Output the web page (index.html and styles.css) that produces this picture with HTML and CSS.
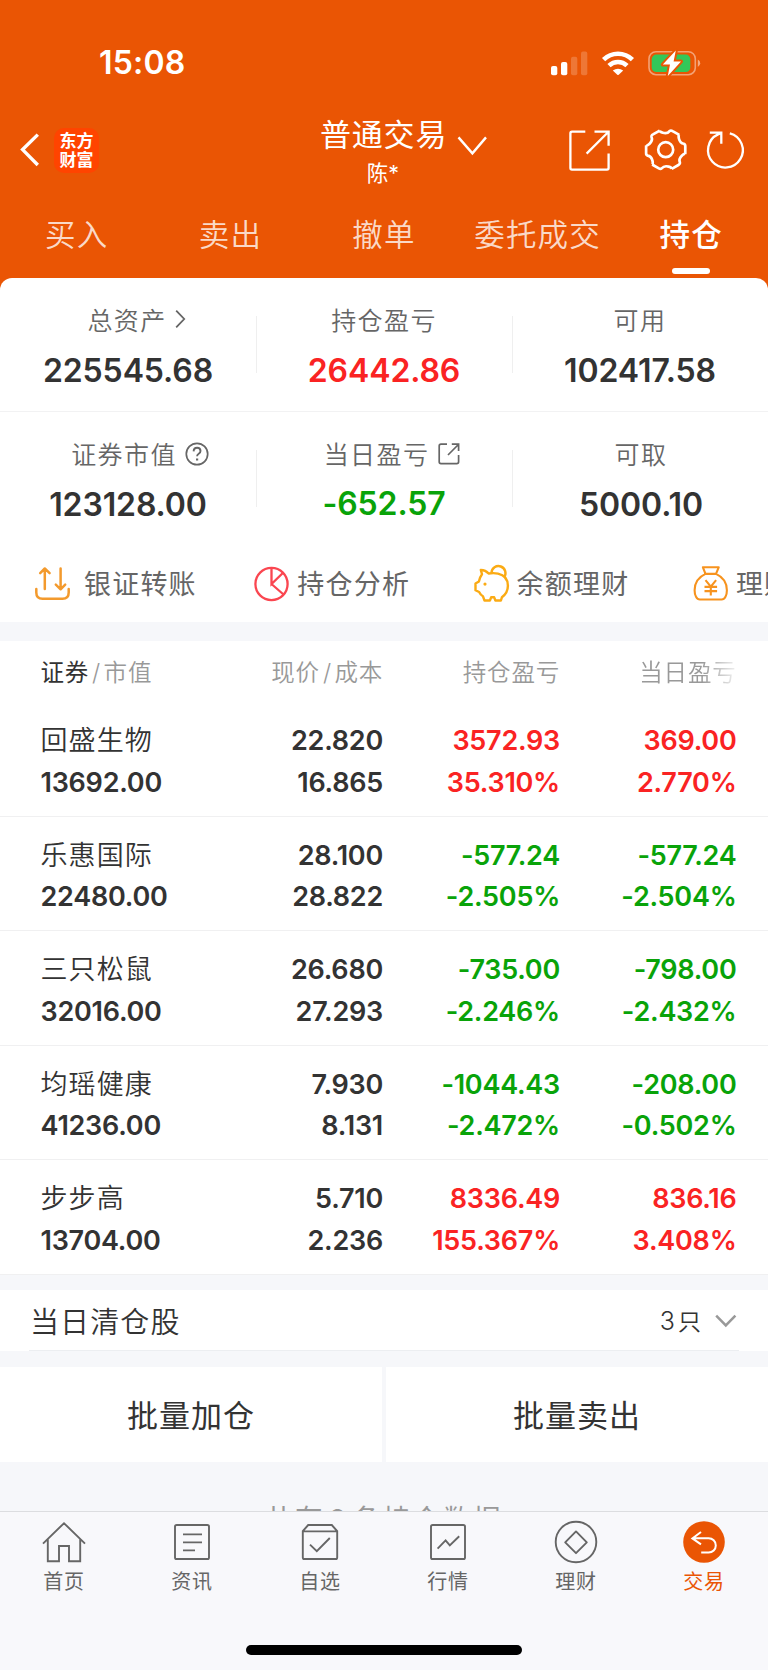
FILE: index.html
```html
<!DOCTYPE html>
<html lang="zh-CN">
<head>
<meta charset="utf-8">
<title>持仓</title>
<link rel="stylesheet" href="styles.css">
</head>
<body>
<div class="app">
  <header class="top">
    <div class="status">
      <span class="clock">15:08</span>
      <svg class="status-icons" width="152" height="32" viewBox="550 46 152 32">
        <g fill="#fff">
          <rect x="551" y="65" width="6.3" height="9.2" rx="2"/>
          <rect x="561" y="61" width="6.3" height="13.2" rx="2"/>
          <g opacity=".2"><rect x="571" y="55.7" width="6.3" height="18.5" rx="2"/><rect x="581" y="50.6" width="6.3" height="23.6" rx="2"/></g>
        </g>
        <g fill="none" stroke="#fff" stroke-width="4.6">
          <path d="M603.6 58.6a20.6 20.6 0 0 1 28.8 0"/>
          <path d="M609 64.6a13 13 0 0 1 18 0"/>
        </g>
        <path d="M612.8 69.6q5.2-3.8 10.4 0l-4.5 4.2q-.7.6-1.4 0z" fill="#fff"/>
        <rect x="649" y="50.7" width="46.3" height="23" rx="7" fill="none" stroke="#fff" stroke-opacity=".45" stroke-width="1.6"/>
        <path d="M697.8 58.5q2.4 1.2 2.4 3.7t-2.4 3.7z" fill="#fff" opacity=".5"/>
        <rect x="651.7" y="53.6" width="38.6" height="17.4" rx="4.6" fill="#34c759"/>
        <path d="M675.8 49.5 662.8 63.6h7.2l-2.2 11.4 13.2-14.6h-7.4z" fill="#fff" stroke="#ea5504" stroke-width="4" stroke-linejoin="round" paint-order="stroke"/>
      </svg>
    </div>
    <div class="nav">
      <svg class="back" width="22" height="36" viewBox="19 132 22 36"><path d="M37.8 134.6 22.6 149.6 37.8 165" fill="none" stroke="#fff" stroke-width="3.4"/></svg>
      <div class="logo"><span>东方</span><span>财富</span></div>
      <div class="account">
        <div class="account-name">普通交易</div>
        <div class="account-user">陈*</div>
      </div>
      <svg class="caret" width="30" height="22" viewBox="457 135 30 22"><path d="M458.5 137.4 472.4 153.4 486 137.4" fill="none" stroke="#fff" stroke-width="2.4"/></svg>
      <svg class="nav-icons" width="180" height="46" viewBox="567 127 180 46" fill="none" stroke="#fff" stroke-width="2.3">
        <path d="M585.3 131.7H572q-1.6 0-1.6 1.6V168q0 1.6 1.6 1.6h35q1.6 0 1.6-1.6V153.5M594.5 131.7h14.1V145.8M586.6 153.6 608 132.3"/>
        <g transform="translate(665.7 149.7) scale(.96)" stroke-width="2.8" stroke-linejoin="round">
          <circle r="7.8"/>
          <path id="tooth" d="M14.15-15.5Q13-14.5 13.8-11.4 15-6.7 18.8-6.2 20.5-5.6 20.4-3.5V3.5L20.3 4.5"/>
          <use href="#tooth" transform="rotate(60)"/><use href="#tooth" transform="rotate(120)"/><use href="#tooth" transform="rotate(180)"/><use href="#tooth" transform="rotate(240)"/><use href="#tooth" transform="rotate(300)"/>
        </g>
        <path d="M729.8 133.3A17.4 17.4 0 1 1 718 134.4L721.3 132.9M709.8 132.7h11.5v11"/>
      </svg>
    </div>
    <nav class="tabs">
      <span>买入</span><span>卖出</span><span>撤单</span><span>委托成交</span><span class="on">持仓</span>
    </nav>
  </header>

  <section class="summary">
    <div class="figures">
      <div class="figure"><div class="label arrowed">总资产<svg width="12" height="20" viewBox="0 0 12 20"><path d="M1.2 1.6 9.2 10 1.2 18.4" fill="none" stroke="#666" stroke-width="1.8"/></svg></div><b>225545.68</b></div>
      <div class="figure"><div class="label">持仓盈亏</div><b class="up">26442.86</b></div>
      <div class="figure"><div class="label">可用</div><b>102417.58</b></div>
    </div>
    <div class="figures second">
      <div class="figure"><div class="label helped">证券市值<svg width="24" height="24" viewBox="0 0 24 24" fill="none" stroke="#666" stroke-width="1.7"><circle cx="12" cy="12" r="10.7"/><path d="M8.6 9.4q.2-3.6 3.5-3.6t3.4 3.1q0 1.7-1.8 2.8-1.6 1-1.6 2.5" stroke-width="1.9"/><path d="M12.1 16.4v2.1" stroke-width="2.2"/></svg></div><b>123128.00</b></div>
      <div class="figure"><div class="label linked">当日盈亏<svg width="24" height="24" viewBox="0 0 24 24" fill="none" stroke="#666" stroke-width="1.7"><path d="M10 2.2H4Q2.2 2.2 2.2 4v15.8q0 1.8 1.8 1.8h15.8q1.8 0 1.8-1.8V13M14.8 2.2h6.8V9M11 13 21.4 2.5"/></svg></div><b class="down">-652.57</b></div>
      <div class="figure shifted"><div class="label">可取</div><b>5000.10</b></div>
    </div>
    <div class="actions">
      <div class="action wide"><svg width="36" height="36" viewBox="35 565.5 36 36" fill="none" stroke="#f39a2d" stroke-width="2.5" stroke-linecap="round" stroke-linejoin="round"><path d="M36.3 588.6v3.4q0 6.2 6.2 6.2h20q6.2 0 6.2-6.2v-3.4M44.8 588.5V568.2M40.2 572.6 44.8 568l4.8 4.6M60.6 568v20M55.8 584.2l4.8 4.6 4.6-4.6"/></svg><span>银证转账</span></div>
      <div class="action"><svg width="36" height="36" viewBox="254.5 565.5 36 36" fill="none" stroke="#fa4650" stroke-width="2.3"><circle cx="272" cy="583.5" r="16.1"/><path d="M272 567.3v16.2L283.6 572.2M272 583.5 284 594"/></svg><span>持仓分析</span></div>
      <div class="action"><svg width="36" height="36" viewBox="473.5 565.5 36 36" fill="none" stroke="#fbab14" stroke-width="2.4" stroke-linejoin="round"><path d="M481.5 573.7 480.3 569.4q4.8.2 7.8 3.6 5-.8 9.4.1c6.5 1.4 9.9 6.2 9.9 12.2 0 5.3-2.6 9-6 11.5L500.4 600h-5.5l-1.2-3.2h-3l-1.3 3.2h-5.4l-1.6-4.3q-2.4-1.3-3.8-4.2l-3.6-1.8v-6.7l3.4-2q.9-4.4 3.1-7.3z"/><path d="M491 572.4a7 7 0 1 1 12.6 4.4"/><circle cx="484.5" cy="583.6" r="1.6" fill="#fbab14" stroke="none"/></svg><span>余额理财</span></div>
      <div class="action"><svg width="36" height="36" viewBox="692.5 565.5 36 36" fill="none" stroke="#f7931e" stroke-width="2.1" stroke-linejoin="round"><path d="M702.4 566.8h15.8l-2.7 6.6c7.4 3.4 10.9 9.2 10.9 16.4 0 5-2 9.2-5.3 9.2h-21.7c-3.3 0-5.3-4.2-5.3-9.2 0-7.2 3.5-13 10.9-16.4zM703.5 573.4h13.4M705 579.6l5.3 6.6 5.3-6.6M704 586.4h12.6M704 590.6h12.6M710.3 586v9"/></svg><span>理财</span></div>
    </div>
  </section>

  <section class="holdings">
    <div class="row head"><div class="c1"><em>证券</em><i>/</i>市值</div><div>现价<i>/</i>成本</div><div>持仓盈亏</div><div class="fade">当日盈亏</div></div>
    <div class="row"><div class="c1"><span class="name">回盛生物</span><b>13692.00</b></div><div><b>22.820</b><b>16.865</b></div><div class="up"><b>3572.93</b><b>35.310%</b></div><div class="up"><b>369.00</b><b>2.770%</b></div></div>
    <div class="row"><div class="c1"><span class="name">乐惠国际</span><b>22480.00</b></div><div><b>28.100</b><b>28.822</b></div><div class="down"><b>-577.24</b><b>-2.505%</b></div><div class="down"><b>-577.24</b><b>-2.504%</b></div></div>
    <div class="row"><div class="c1"><span class="name">三只松鼠</span><b>32016.00</b></div><div><b>26.680</b><b>27.293</b></div><div class="down"><b>-735.00</b><b>-2.246%</b></div><div class="down"><b>-798.00</b><b>-2.432%</b></div></div>
    <div class="row"><div class="c1"><span class="name">均瑶健康</span><b>41236.00</b></div><div><b>7.930</b><b>8.131</b></div><div class="down"><b>-1044.43</b><b>-2.472%</b></div><div class="down"><b>-208.00</b><b>-0.502%</b></div></div>
    <div class="row"><div class="c1"><span class="name">步步高</span><b>13704.00</b></div><div><b>5.710</b><b>2.236</b></div><div class="up"><b>8336.49</b><b>155.367%</b></div><div class="up"><b>836.16</b><b>3.408%</b></div></div>
  </section>

  <section class="cleared">
    <span class="cleared-title">当日清仓股</span>
    <span class="cleared-count">3<span>只</span></span>
    <svg width="22" height="14" viewBox="0 0 22 14"><path d="M1.2 1.6 10.8 11.4 20.4 1.6" fill="none" stroke="#999" stroke-width="2.5"/></svg>
  </section>

  <section class="batch"><div>批量加仓</div><div>批量卖出</div></section>

  <div class="total">共有<span>8</span>条持仓数据</div>

  <footer class="dock">
    <div class="dock-items">
      <div class="dock-item"><svg width="44" height="44" viewBox="-22 -22 44 44"><path d="M-21 1.6 0-18.8 21 1.6M-16.2-2.4V19.2H-5V4H5V19.2H16.2V-2.4"/></svg><span>首页</span></div>
      <div class="dock-item"><svg width="44" height="44" viewBox="-22 -22 44 44"><rect x="-17" y="-17" width="34" height="34" rx="1.6"/><path d="M-9-7.6H10M-9 .4H10M-9 8.4H3"/></svg><span>资讯</span></div>
      <div class="dock-item"><svg width="44" height="44" viewBox="-22 -22 44 44"><path d="M-17.2-11V15.4q0 1.6 1.6 1.6h31.2q1.6 0 1.6-1.6V-11L11.8-17H-11.8zM-17.2-10.6H17.2M-10 2.6-3.2 9.2 9.8-4"/></svg><span>自选</span></div>
      <div class="dock-item"><svg width="44" height="44" viewBox="-22 -22 44 44"><rect x="-17" y="-17" width="34" height="34" rx="1.6"/><path d="M-10.4 6.6-2.4-1.6 1.8 3.4 11.2-5.8"/></svg><span>行情</span></div>
      <div class="dock-item"><svg width="44" height="44" viewBox="-22 -22 44 44"><circle r="20.3"/><path d="M0-10.6 10.8 .4 0 11.2-10.8 .4z" stroke-linejoin="round"/></svg><span>理财</span></div>
      <div class="dock-item active"><svg width="44" height="44" viewBox="-22 -22 44 44"><circle r="20.8" class="disc"/><path class="turn" d="M-3-10-11.6-3.6-3 2.4M-11-3.8H4.6a7.2 7.2 0 0 1 0 14.4H-2.8"/></svg><span>交易</span></div>
    </div>
    <div class="home-bar"></div>
  </footer>
</div>
</body>
</html>
```
FILE: styles.css
```css
* { box-sizing: border-box; }
body {
  margin: 0;
  font-family: Inter, "Noto Sans CJK SC", sans-serif;
  color: #333;
  background: #f6f7fa;
}
svg { display: block; flex: none; overflow: visible; }
i, em { font-style: normal; }
.app { display: flex; flex-direction: column; width: 768px; height: 1670px; overflow: hidden; background: #f6f7fa; }

.top { height: 290px; flex: none; background: #ea5504; color: #fff; }
.status { height: 94px; padding: 31px 66px 0 99px; display: flex; justify-content: space-between; align-items: center; }
.clock { font-size: 32px; font-weight: 600; line-height: 32px; letter-spacing: 0.2px; }
.nav { height: 110px; display: flex; align-items: center; padding: 2px 21px 0 19px; }
.logo {
  width: 45px; height: 45px; margin-left: 13px; padding-bottom: 2px; border-radius: 10px; background: #ff4400;
  display: flex; flex-direction: column; align-items: center; justify-content: center;
  font: 700 17px/19px "Noto Sans CJK SC", sans-serif;
}
.account { width: 126px; margin: 5px 0 0 221px; text-align: center; }
.account-name { font-size: 31px; line-height: 40px; letter-spacing: 0.8px; white-space: nowrap; }
.account-user { font-size: 21.5px; line-height: 36px; }
.caret { margin: -9px 0 0 11px; }
.nav-icons { margin-left: auto; }
.tabs { height: 74px; display: grid; grid-template-columns: repeat(5, 1fr); font-size: 30.5px; letter-spacing: 1.2px; color: rgba(255, 255, 255, .8); font-weight: 350; }
.tabs span { display: flex; flex-direction: column; align-items: center; line-height: 62px; }
.tabs .on { color: #fff; font-weight: 500; }
.tabs .on::after { content: ""; width: 38px; height: 6px; margin-top: 2px; border-radius: 3px; background: #fff; }

.summary { height: 344px; margin-top: -12px; flex: none; background: #fff; border-radius: 12px 12px 0 0; overflow: hidden; }
.figures { height: 134px; display: grid; grid-template-columns: repeat(3, 1fr); border-bottom: 1px solid #f2f2f3; }
.figures.second { border: 0; }
.figure { position: relative; display: flex; flex-direction: column; align-items: center; padding-top: 22px; }
.figure + .figure::before { content: ""; position: absolute; left: 0; top: 38px; width: 1px; height: 57px; background: #efefef; }
.figure b { font-size: 32px; line-height: 40px; margin-top: 13px; font-weight: 600; letter-spacing: -0.1px; }
.shifted { padding-left: 2px; }
.label { display: flex; align-items: center; height: 38px; font-size: 25px; letter-spacing: 1.4px; color: #666; font-weight: 350; }
.label svg { margin-left: 8px; }
.arrowed { padding-left: 18px; }
.helped { padding-left: 24px; }
.linked { padding-left: 17px; }
.up { color: #fa2323; }
.down { color: #09a309; }
.second .label svg { margin-top: 1px; }
.second .down { margin-top: 12px; }
.actions { display: flex; padding: 15px 0 0 35px; }
.action { flex: none; width: 219.3px; height: 46px; display: flex; align-items: center; color: #666; font-size: 27px; letter-spacing: 1.2px; white-space: nowrap; }
.action span { margin-top: -4px; }
.action svg { margin-right: 7px; }
.wide svg { margin-right: 13px; }

.holdings { margin-top: 19px; height: 634px; flex: none; background: #fff; }
.row { height: 114.6px; display: grid; grid-template-columns: 206px 177px 177px 176.5px; text-align: right; border-bottom: 1px solid #f0f0f1; padding-top: 18px; }
.row > div { display: flex; flex-direction: column; }
.row .c1 { padding-left: 40.5px; text-align: left; }
.row b, .name { font-size: 27px; line-height: 41.5px; height: 41.5px; font-weight: 600; }
.row b { letter-spacing: -0.25px; }
.row .name { font-weight: 350; letter-spacing: 1.1px; }
.row.head { height: 61px; padding: 0; border: 0; color: #999; font-size: 23.5px; font-weight: 350; letter-spacing: 0.8px; line-height: 63px; }
.head > div { flex-direction: row; justify-content: flex-end; }
.head .c1 { justify-content: flex-start; }
.head em { color: #333; font-weight: 400; }
.head i { margin: 0 2.5px 0 3px; }
.fade { -webkit-mask-image: linear-gradient(90deg, #000 142px, transparent 182px); mask-image: linear-gradient(90deg, #000 142px, transparent 182px); }

.cleared { flex: none; margin: 15px 0 0; height: 61px; display: flex; align-items: center; padding: 0 31px 0 30px; background: linear-gradient(#eceef1, #eceef1) 29px 100% / 710px 1px no-repeat #fff; }
.cleared-title { font-size: 29px; letter-spacing: 1.1px; margin: -2px auto 0 0; font-weight: 350; }
.cleared-count { font-size: 25px; margin: -2px 14px 0 0; font-weight: 350; }
.cleared-count span { font-size: 23px; margin-left: 3px; }
.batch { flex: none; margin-top: 16px; height: 95px; display: grid; grid-template-columns: 382px 382px; gap: 4px; }
.batch div { background: #fff; display: flex; align-items: center; justify-content: center; padding-bottom: 3px; font-size: 31px; letter-spacing: 1px; }
.total { flex: none; height: 49px; padding-top: 39px; overflow: hidden; text-align: center; white-space: nowrap; font-size: 27.5px; line-height: 36px; letter-spacing: 2.6px; color: #999; }
.total span { margin: 0 4px; }

.dock { flex: none; height: 159px; border-top: 1px solid #dcdde0; background: #f8f8fb; }
.dock-items { display: grid; grid-template-columns: repeat(6, 1fr); padding-top: 8px; height: 133px; }
.dock-item { display: flex; flex-direction: column; align-items: center; font-size: 20px; line-height: 30px; letter-spacing: 0.7px; color: #666; }
.dock-item svg { fill: none; stroke: #666; stroke-width: 1.9; margin-bottom: 3px; }
.active { color: #ea5504; }
.dock .active .disc { fill: #ea5504; stroke: none; }
.dock .active .turn { stroke: #fff; stroke-width: 2; }
.home-bar { width: 276px; height: 10px; margin: 0 auto; border-radius: 5px; background: #000; }
```
